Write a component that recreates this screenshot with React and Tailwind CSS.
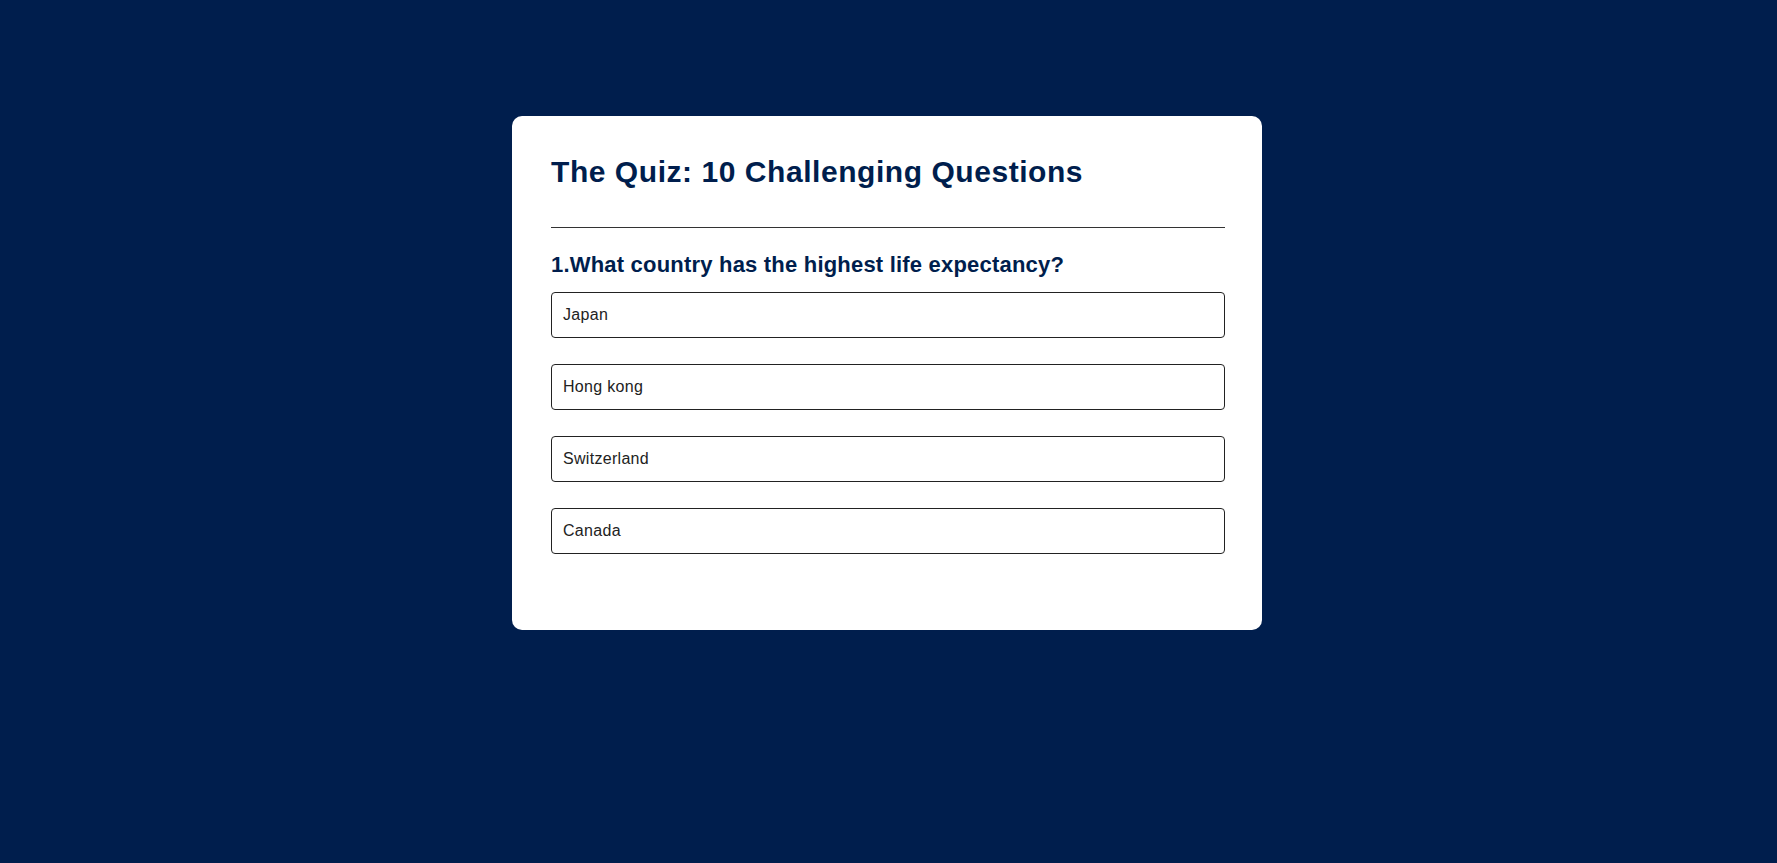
export default function App() {
  const options = ["Japan", "Hong kong", "Switzerland", "Canada"];

  return (
    <div className="min-h-screen bg-[#001e4d] pt-[116px] pr-[3px] font-['Liberation_Sans',Arial,sans-serif]">
      {/* Carte du quiz */}
      <div className="mx-auto w-[750px] rounded-[10px] bg-white pl-[39px] pr-[37px] pt-[39px] pb-[76px]">
        <h1 className="text-[30px] leading-[34px] font-bold tracking-[0.55px] text-[#001e4d]">
          The Quiz: 10 Challenging Questions
        </h1>
        <div className="mt-[38px] h-px bg-[#333]" />

        <h2 className="mt-[24px] text-[22px] leading-[26px] font-bold tracking-[0.2px] text-[#001e4d]">
          1.What country has the highest life expectancy?
        </h2>

        <div className="mt-[14px] flex flex-col gap-[26px]">
          {options.map((opt) => (
            <button
              key={opt}
              className="w-full rounded-[4px] border border-[#222] bg-white px-[11px] py-[10px] text-left text-[16px] leading-6 tracking-[0.3px] text-[#222]"
            >
              {opt}
            </button>
          ))}
        </div>
      </div>
    </div>
  );
}
